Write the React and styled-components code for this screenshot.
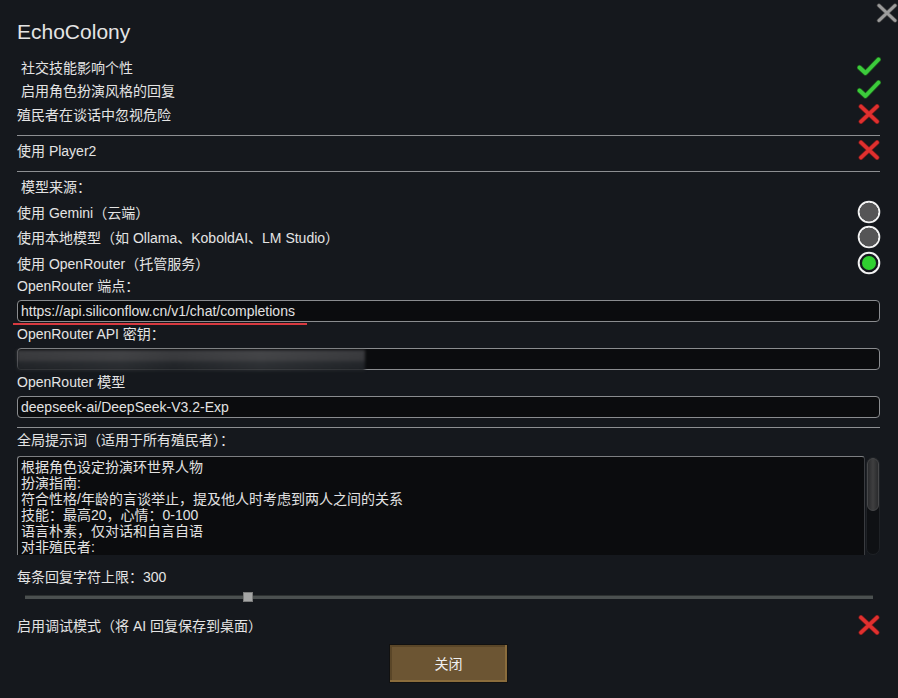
import React from "react";
import styled, { createGlobalStyle } from "styled-components";

const GlobalStyle = createGlobalStyle`
  html, body {
    margin: 0;
    padding: 0;
    background: #15181d;
  }
  body {
    font-family: "Liberation Sans", "Noto Sans CJK SC", sans-serif;
    color: #e4e4e4;
  }
`;

const Window = styled.div`
  position: relative;
  width: 898px;
  height: 698px;
  box-sizing: border-box;
  padding: 20px 18px 0 17px;
  display: flex;
  flex-direction: column;
  overflow: hidden;
`;

const CloseCorner = styled.div`
  position: absolute;
  top: 3px;
  right: 2px;
  width: 20px;
  height: 20px;
`;

const Title = styled.div`
  height: 24px;
  line-height: 24px;
  font-size: 21px;
  margin-bottom: 11px;
`;

const Row = styled.div`
  display: flex;
  align-items: center;
  justify-content: space-between;
  flex-shrink: 0;
  height: ${(p) => p.h || 24}px;
  margin-top: ${(p) => p.top || 0}px;
  font-size: 14px;
  padding-left: ${(p) => (p.indent ? 4 : 0)}px;
`;

const Divider = styled.div`
  flex-shrink: 0;
  height: 1px;
  background: #8d8f92;
  margin: ${(p) => p.top || 9}px 0 ${(p) => p.bottom || 2}px 0;
`;

const Label = styled.div`
  flex-shrink: 0;
  height: 21px;
  line-height: 21px;
  font-size: 14px;
  margin-top: ${(p) => p.top || 0}px;
`;

const InputWrap = styled.div`
  position: relative;
  flex-shrink: 0;
  margin-top: 3px;
`;

const Input = styled.div`
  height: 20px;
  line-height: 20px;
  border: 1px solid #8a8c8f;
  border-radius: 4px;
  background: #0b0c0e;
  font-size: 14px;
  padding-left: 3px;
  color: #e2e2e2;
  white-space: nowrap;
  overflow: hidden;
`;

const Underline = styled.div`
  position: absolute;
  left: -4px;
  bottom: -3px;
  width: 294px;
  height: 2px;
  background: #d83a40;
`;

const Blur = styled.div`
  position: absolute;
  left: 0;
  top: 2px;
  width: 348px;
  height: 21px;
  background: linear-gradient(
      90deg,
      rgba(255, 255, 255, 0) 0%,
      rgba(255, 255, 255, 0.04) 30%,
      rgba(255, 255, 255, 0) 45%,
      rgba(255, 255, 255, 0.05) 70%,
      rgba(255, 255, 255, 0) 100%
    ),
    linear-gradient(180deg, #3b3c3f 0%, #37383b 48%, #25282c 58%, #1e2125 100%);
  filter: blur(1.5px);
`;

const PromptArea = styled.div`
  display: flex;
  flex-shrink: 0;
  gap: 1px;
  margin-top: 5px;
  height: 99px;
`;

const TextBox = styled.div`
  flex: 1;
  border: 1px solid #7d7f82;
  border-right-color: #3a3c40;
  border-bottom: none;
  border-radius: 3px 3px 0 0;
  background: #0b0c0e;
  padding: 2px 3px 0;
  font-size: 14px;
  line-height: 16px;
  color: #e2e2e2;
  overflow: hidden;
  white-space: pre;
`;

const ScrollTrack = styled.div`
  width: 14px;
  margin-top: 1px;
  border-radius: 7px;
  background: #0f1114;
  border: 1px solid #1f2226;
  box-sizing: border-box;
  display: flex;
  flex-direction: column;
`;

const ScrollThumb = styled.div`
  height: 53px;
  border-radius: 6px;
  background: linear-gradient(90deg, #2a2b2d, #3f3f40 50%, #2a2b2d);
  border: 1px solid #47484a;
  box-sizing: border-box;
`;

const SliderBox = styled.div`
  flex-shrink: 0;
  height: 18px;
  display: flex;
  align-items: center;
  padding: 0 7px 0 8px;
`;

const Track = styled.div`
  position: relative;
  flex: 1;
  height: 4px;
  background: #4b5050;
  border-top: 1px solid #2d3131;
  box-sizing: border-box;
`;

const Handle = styled.div`
  position: absolute;
  top: -4px;
  width: 10px;
  height: 10px;
  margin-left: -5px;
  background: #a5a6a6;
  border: 1px solid #7a7b7b;
  box-sizing: border-box;
`;

const Footer = styled.div`
  display: flex;
  flex-shrink: 0;
  justify-content: center;
  margin-top: 7px;
`;

const Button = styled.div`
  width: 119px;
  height: 39px;
  box-sizing: border-box;
  border: 1px solid #111;
  background: #6c5533;
  box-shadow: inset -2px -2px 0 #8a6c3c, inset 2px 2px 0 #5a4628;
  display: flex;
  align-items: center;
  justify-content: center;
  font-size: 14px;
  color: #f0f0f0;
`;

const Icon = styled.div`
  width: 24px;
  display: flex;
  justify-content: center;
  margin-right: -1px;
`;

const Check = () => (
  <svg width="24" height="20" viewBox="0 0 24 20">
    <path d="M2.5 10.5 L8.5 16 L21.5 2.5" fill="none" stroke="#1d5a1d" strokeWidth="5.4" strokeLinecap="round" strokeLinejoin="round" />
    <path d="M2.5 10.5 L8.5 16 L21.5 2.5" fill="none" stroke="#3ccb3c" strokeWidth="3.8" strokeLinecap="round" strokeLinejoin="round" />
  </svg>
);

const Cross = ({ color = "#e0302f", dark = "#7a1a1a", w = 3.6 }) => (
  <svg width="22" height="20" viewBox="0 0 22 20">
    <path d="M3 2.5 L19 17.5 M19 2.5 L3 17.5" fill="none" stroke={dark} strokeWidth={w + 1.4} strokeLinecap="round" />
    <path d="M3 2.5 L19 17.5 M19 2.5 L3 17.5" fill="none" stroke={color} strokeWidth={w} strokeLinecap="round" />
  </svg>
);

const Radio = ({ on }) => (
  <svg width="24" height="24" viewBox="0 0 24 24">
    <circle cx="12" cy="12" r="10.3" fill="#15181d" stroke="#f2f2f2" strokeWidth="2" />
    {on ? (
      <circle cx="12" cy="12" r="7" fill="#30d030" />
    ) : (
      <circle cx="12" cy="12" r="9.3" fill="#555556" />
    )}
  </svg>
);

const promptLines = [
  "根据角色设定扮演环世界人物",
  "扮演指南:",
  "符合性格/年龄的言谈举止，提及他人时考虑到两人之间的关系",
  "技能：最高20，心情：0-100",
  "语言朴素，仅对话和自言自语",
  "对非殖民者:",
];

export default function App() {
  const sliderPos = 0.2625;
  return (
    <>
      <GlobalStyle />
      <Window>
        <CloseCorner>
          <Cross color="#9c9c9c" dark="#4a4a4a" w={3} />
        </CloseCorner>
        <Title>EchoColony</Title>

        <Row indent h={23.5}>
          <span>社交技能影响个性</span>
          <Icon><Check /></Icon>
        </Row>
        <Row indent h={23.5}>
          <span>启用角色扮演风格的回复</span>
          <Icon><Check /></Icon>
        </Row>
        <Row h={23.5}>
          <span>殖民者在谈话中忽视危险</span>
          <Icon><Cross /></Icon>
        </Row>

        <Divider />
        <Row>
          <span>使用 Player2</span>
          <Icon><Cross /></Icon>
        </Row>
        <Divider />

        <Row indent h={25.5}>
          <span>模型来源：</span>
        </Row>
        <Row h={25.5}>
          <span>使用 Gemini（云端）</span>
          <Icon><Radio /></Icon>
        </Row>
        <Row h={25.5}>
          <span>使用本地模型（如 Ollama、KoboldAI、LM Studio）</span>
          <Icon><Radio /></Icon>
        </Row>
        <Row h={25.5}>
          <span>使用 OpenRouter（托管服务）</span>
          <Icon><Radio on /></Icon>
        </Row>

        <Label>OpenRouter 端点：</Label>
        <InputWrap>
          <Input>https://api.siliconflow.cn/v1/chat/completions</Input>
          <Underline />
        </InputWrap>

        <Label top={2}>OpenRouter API 密钥：</Label>
        <InputWrap>
          <Input />
          <Blur />
        </InputWrap>

        <Label top={2}>OpenRouter 模型</Label>
        <InputWrap>
          <Input>deepseek-ai/DeepSeek-V3.2-Exp</Input>
        </InputWrap>

        <Divider top={9} bottom={3} />
        <Label top={-1}>全局提示词（适用于所有殖民者）：</Label>
        <PromptArea>
          <TextBox>{promptLines.join("\n")}</TextBox>
          <ScrollTrack>
            <ScrollThumb />
          </ScrollTrack>
        </PromptArea>

        <Label top={12}>每条回复字符上限：300</Label>
        <SliderBox>
          <Track>
            <Handle style={{ left: `${sliderPos * 100}%` }} />
          </Track>
        </SliderBox>

        <Row top={7}>
          <span>启用调试模式（将 AI 回复保存到桌面）</span>
          <Icon><Cross /></Icon>
        </Row>

        <Footer>
          <Button>关闭</Button>
        </Footer>
      </Window>
    </>
  );
}
